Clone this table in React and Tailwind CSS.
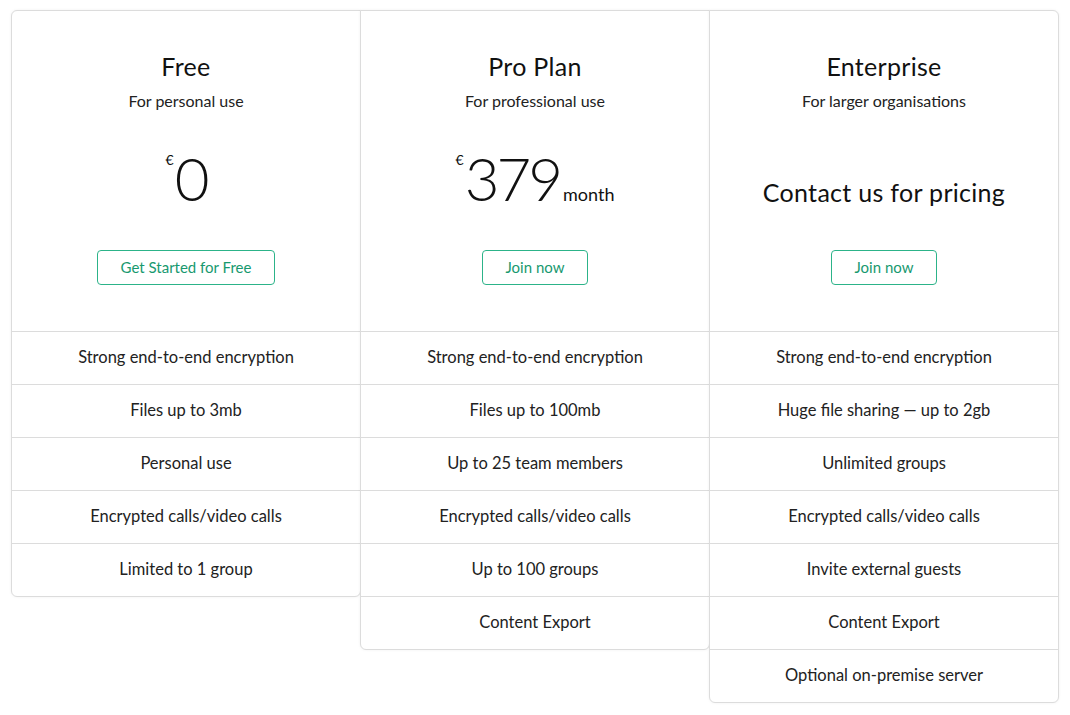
import React from 'react';

const plans = [
  {
    name: 'Free',
    tagline: 'For personal use',
    price: '0',
    cta: 'Get Started for Free',
    corners: 'rounded-tl-[6px] rounded-b-[6px]',
    features: [
      'Strong end-to-end encryption',
      'Files up to 3mb',
      'Personal use',
      'Encrypted calls/video calls',
      'Limited to 1 group',
    ],
  },
  {
    name: 'Pro Plan',
    tagline: 'For professional use',
    price: '379',
    period: 'month',
    cta: 'Join now',
    corners: 'rounded-b-[6px] -ml-px',
    features: [
      'Strong end-to-end encryption',
      'Files up to 100mb',
      'Up to 25 team members',
      'Encrypted calls/video calls',
      'Up to 100 groups',
      'Content Export',
    ],
  },
  {
    name: 'Enterprise',
    tagline: 'For larger organisations',
    cta: 'Join now',
    corners: 'rounded-tr-[6px] rounded-b-[6px] -ml-px',
    features: [
      'Strong end-to-end encryption',
      'Huge file sharing — up to 2gb',
      'Unlimited groups',
      'Encrypted calls/video calls',
      'Invite external guests',
      'Content Export',
      'Optional on-premise server',
    ],
  },
];

function Price({ plan }) {
  if (!plan.price) {
    return (
      <div className="h-[60px] mt-[37px] pt-[14px] text-[25px] leading-[60px] text-[#111] tracking-[0.3px]">
        Contact us for pricing
      </div>
    );
  }
  return (
    <div className="h-[60px] mt-[37px] flex items-baseline text-[#111]">
      <span className="self-start mt-[5px] mr-[1px] text-[14px] leading-none">€</span>
      <span className="text-[60px] leading-none font-light tracking-[-3px]">{plan.price}</span>
      {plan.period && <span className="ml-[3px] text-[18px] leading-none">{plan.period}</span>}
    </div>
  );
}

function PlanColumn({ plan }) {
  return (
    <div className={`w-[350px] shrink-0 border border-[#dcdcdc] bg-white overflow-hidden shadow-[0_0_3px_rgba(0,0,0,0.06)] ${plan.corners}`}>
      <div className="h-[320px] flex flex-col items-center pt-[39px]">
        <h2 className="text-[25px] leading-[32px] text-[#111] tracking-[0.3px]">{plan.name}</h2>
        <p className="mt-[9px] text-[16px] leading-[20px] text-[#222]">{plan.tagline}</p>
        <Price plan={plan} />
        <button className="mt-[42px] h-[35px] px-[23px] rounded-[4px] border border-[#2cb389] text-[15px] text-[#18996f]">
          {plan.cta}
        </button>
      </div>
      {plan.features.map((f) => (
        <div key={f} className="h-[53px] border-t border-[#dcdcdc] flex items-center justify-center pb-px text-[16.5px] text-[#222]">
          {f}
        </div>
      ))}
    </div>
  );
}

export default function App() {
  return (
    <div className="min-h-[715px] bg-white pl-[11px] pt-[10px] flex items-start" style={{ fontFamily: 'Lato, "Noto Sans", sans-serif' }}>
      {plans.map((p) => <PlanColumn key={p.name} plan={p} />)}
    </div>
  );
}
